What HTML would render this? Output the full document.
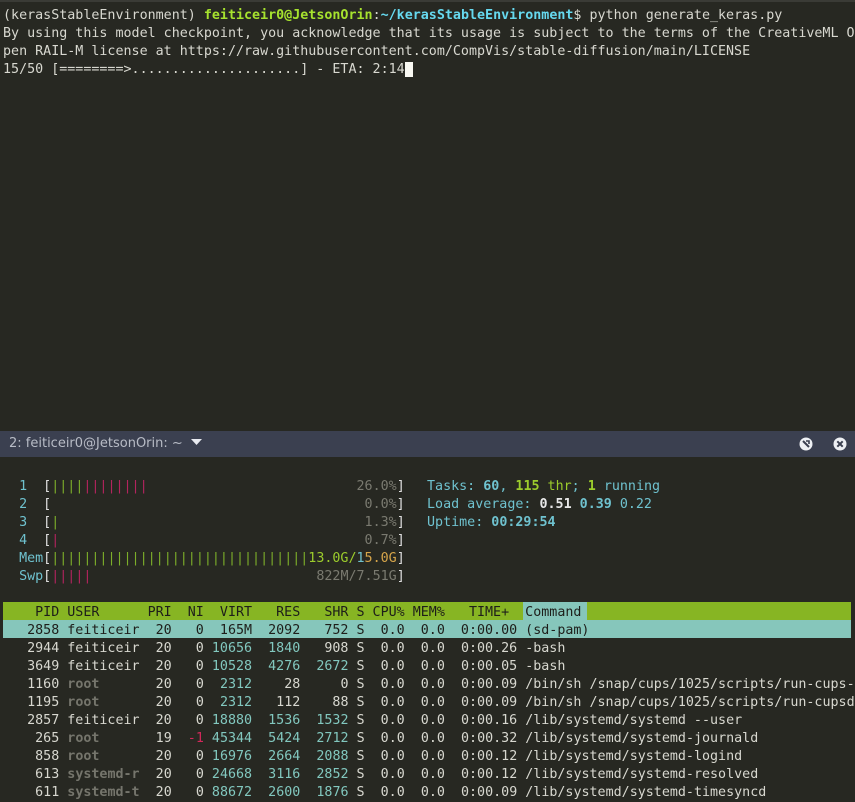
<!DOCTYPE html>
<html><head><meta charset="utf-8"><style>
html,body{margin:0;padding:0;width:855px;height:788px;overflow:hidden;background:#272822;}
pre{margin:0;font-family:"DejaVu Sans Mono","Liberation Mono",monospace;font-size:13.35px;line-height:18px;color:#d8d8d0;position:absolute;white-space:pre;}
.g{color:#a6e22e;font-weight:bold}.b{color:#66d9ef;font-weight:bold}
.cur{background:#f8f8f2;color:#272822}
#topline{position:absolute;left:0;top:0;width:855px;height:2px;background:#3a3b36}
#tab{position:absolute;left:0;top:431px;width:855px;height:26px;background:#3b4050;font-family:"DejaVu Sans","Liberation Sans",sans-serif;font-size:13px;color:#b8bcc6;}
#tab span{position:absolute;left:9px;top:5px}
.c{color:#6fc2cf}.cb{color:#6fc2cf;font-weight:bold}.gb{color:#9ccc2c;font-weight:bold}.gn{color:#9ccc2c}.wb{color:#e8e8e8;font-weight:bold}
.br{color:#e0e0e0}.gr{color:#7a7a70}.G{color:#7cae2a}.R{color:#b3245e}.y{color:#d6a54a}
.rt{color:#75756c;font-weight:bold}.t{color:#82c8bf}.neg{color:#d0285a}
#hdr{position:absolute;left:3px;top:602px;width:848px;height:18px;background:#87b523}
#cmd{position:absolute;left:523px;top:602px;width:64px;height:18px;background:#86c6bb}
#sel{position:absolute;left:3px;top:620px;width:848px;height:18px;background:#86c6bb}
</style></head><body>
<div id="topline"></div>
<pre style="left:3px;top:7px">(kerasStableEnvironment) <span class="g">feiticeir0@JetsonOrin</span>:<span class="b">~/kerasStableEnvironment</span>$ python generate_keras.py
By using this model checkpoint, you acknowledge that its usage is subject to the terms of the CreativeML O
pen RAIL-M license at https://raw.githubusercontent.com/CompVis/stable-diffusion/main/LICENSE
15/50 [========&gt;.....................] - ETA: 2:14<span class="cur"> </span></pre>
<div id="tab"><span>2: feiticeir0@JetsonOrin: ~ &nbsp;<svg width="11" height="8" viewBox="0 0 11 8" style="vertical-align:1px"><path d="M0 1h11L5.5 7z" fill="#e8eaf0"/></svg></span>
<svg style="position:absolute;left:799px;top:6px" width="14" height="14" viewBox="0 0 14 14"><circle cx="7" cy="7" r="6.5" fill="#eef0f4"/><path d="M4 4l6 6" stroke="#3b4050" stroke-width="2"/><path d="M7 4h3v3" stroke="#3b4050" stroke-width="1.6" fill="none"/></svg>
<svg style="position:absolute;left:833px;top:6px" width="14" height="14" viewBox="0 0 14 14"><circle cx="7" cy="7" r="6.5" fill="#eef0f4"/><path d="M4.3 4.3l5.4 5.4M9.7 4.3l-5.4 5.4" stroke="#3b4050" stroke-width="2"/></svg>
</div>
<pre style="left:3px;top:478px"><span class="c">  1  </span><span class="br">[</span><span class="G">||||</span><span class="R">||||||||</span>                          <span class="gr">26.0%</span><span class="br">]</span>
<span class="c">  2  </span><span class="br">[</span>                                       <span class="gr">0.0%</span><span class="br">]</span>
<span class="c">  3  </span><span class="br">[</span><span class="G">|</span>                                      <span class="gr">1.3%</span><span class="br">]</span>
<span class="c">  4  </span><span class="br">[</span><span class="R">|</span>                                      <span class="gr">0.7%</span><span class="br">]</span>
<span class="c">  Mem</span><span class="br">[</span><span class="G">||||||||||||||||||||||||||||||||</span><span class="gn">13.0G/</span><span class="c">1</span><span class="y">5.0G</span><span class="br">]</span>
<span class="c">  Swp</span><span class="br">[</span><span class="R">|||||</span>                            <span class="gr">822M/7.51G</span><span class="br">]</span></pre>
<pre style="left:427px;top:478px"><span class="c">Tasks: </span><span class="cb">60</span><span class="c">, </span><span class="gb">115</span><span class="gn"> thr</span><span class="c">; </span><span class="gb">1</span><span class="c"> running</span>
<span class="c">Load average: </span><span class="wb">0.51 </span><span class="cb">0.39 </span><span class="c">0.22</span>
<span class="c">Uptime: </span><span class="cb">00:29:54</span></pre>
<div id="hdr"></div><div id="cmd"></div><div id="sel"></div>
<pre style="left:3px;top:604px;color:#1e1e1a">    PID USER      PRI  NI  VIRT   RES   SHR S CPU% MEM%   TIME+  Command
   2858 feiticeir  20   0  165M  2092   752 S  0.0  0.0  0:00.00 (sd-pam)</pre>
<pre style="left:3px;top:640px">   2944 feiticeir  20   0 <span class="t">10656</span>  <span class="t">1840</span>   908 S  0.0  0.0  0:00.26 -bash
   3649 feiticeir  20   0 <span class="t">10528</span>  <span class="t">4276</span>  <span class="t">2672</span> S  0.0  0.0  0:00.05 -bash
   1160 <span class="rt">root     </span>  20   0  <span class="t">2312</span>    28     0 S  0.0  0.0  0:00.09 /bin/sh /snap/cups/1025/scripts/run-cups-
   1195 <span class="rt">root     </span>  20   0  <span class="t">2312</span>   112    88 S  0.0  0.0  0:00.09 /bin/sh /snap/cups/1025/scripts/run-cupsd
   2857 feiticeir  20   0 <span class="t">18880</span>  <span class="t">1536</span>  <span class="t">1532</span> S  0.0  0.0  0:00.16 /lib/systemd/systemd --user
    265 <span class="rt">root     </span>  19  <span class="neg">-1</span> <span class="t">45344</span>  <span class="t">5424</span>  <span class="t">2712</span> S  0.0  0.0  0:00.32 /lib/systemd/systemd-journald
    858 <span class="rt">root     </span>  20   0 <span class="t">16976</span>  <span class="t">2664</span>  <span class="t">2088</span> S  0.0  0.0  0:00.12 /lib/systemd/systemd-logind
    613 <span class="rt">systemd-r</span>  20   0 <span class="t">24668</span>  <span class="t">3116</span>  <span class="t">2852</span> S  0.0  0.0  0:00.12 /lib/systemd/systemd-resolved
    611 <span class="rt">systemd-t</span>  20   0 <span class="t">88672</span>  <span class="t">2600</span>  <span class="t">1876</span> S  0.0  0.0  0:00.09 /lib/systemd/systemd-timesyncd</pre>
</body></html>
